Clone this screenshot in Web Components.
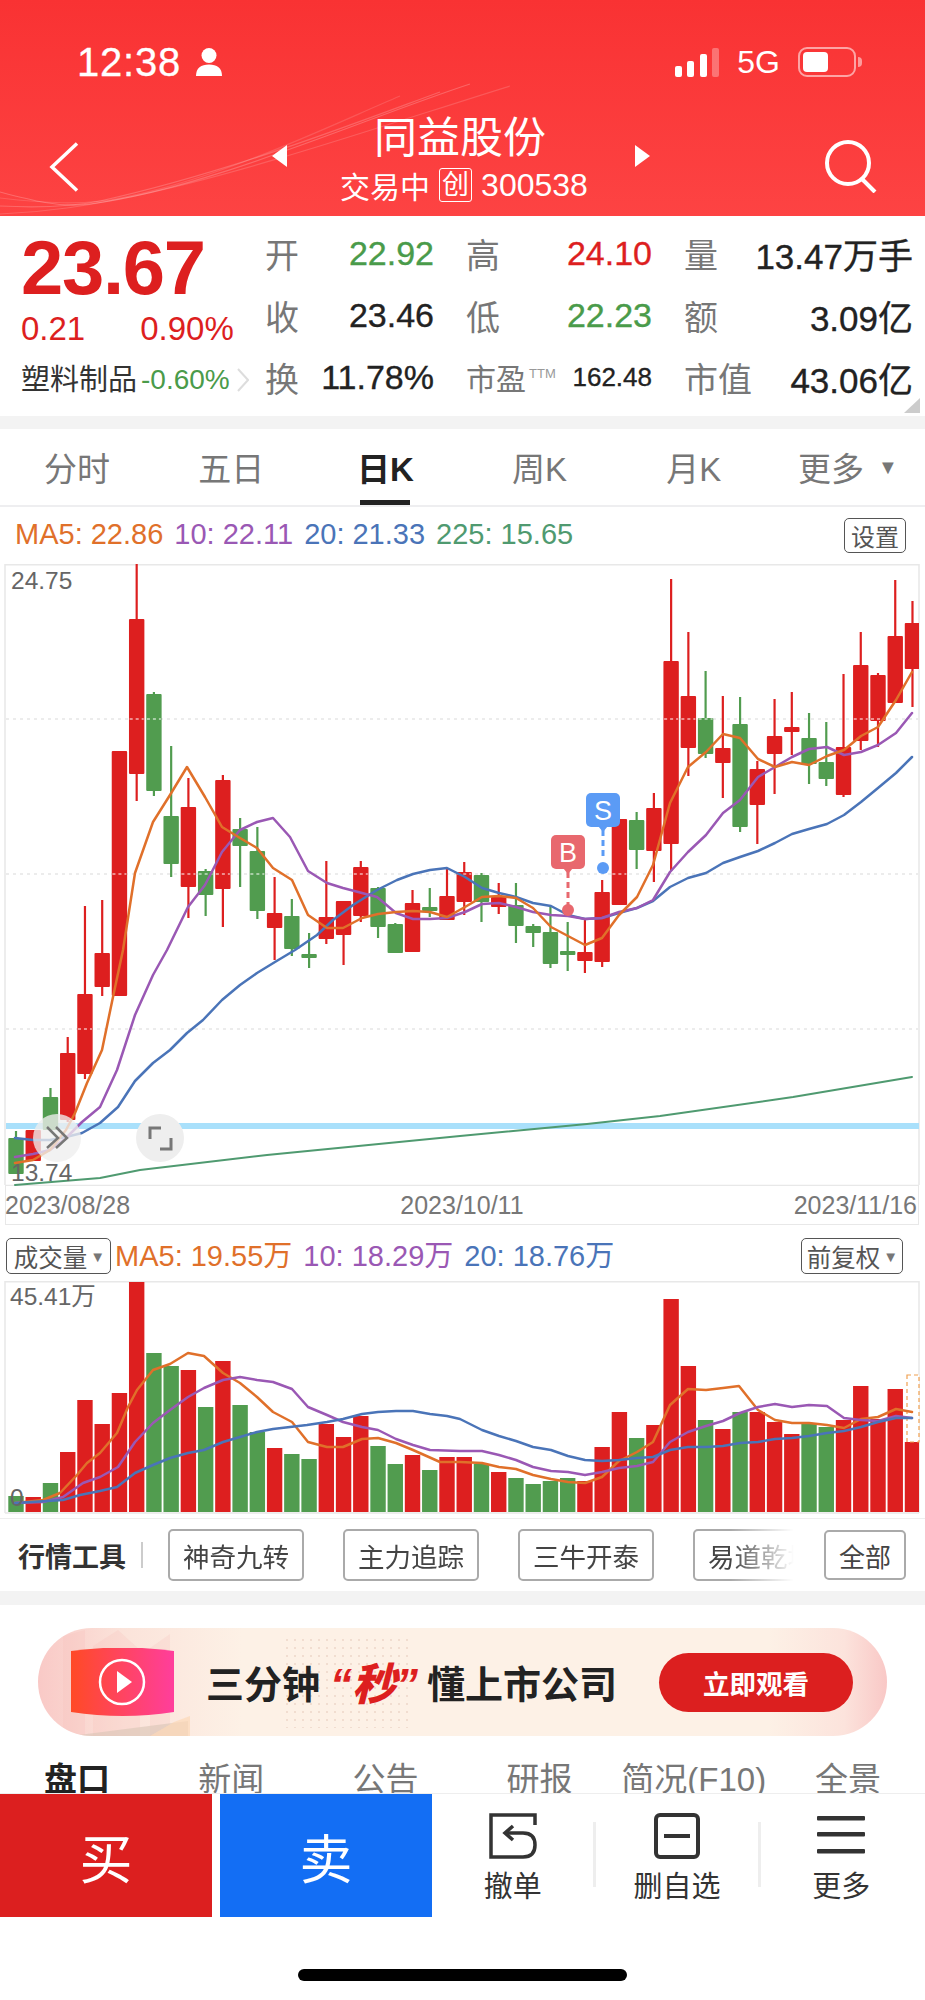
<!DOCTYPE html>
<html lang="zh">
<head>
<meta charset="utf-8">
<title>同益股份</title>
<style>
  html, body { margin: 0; background: #fff; }
  body {
    width: 925px;
    height: 2000px;
    overflow: hidden;
    font-family: "Liberation Sans", "Noto Sans CJK SC", sans-serif;
    color: #222;
  }
</style>
</head>
<body>
<stock-header></stock-header>
<quote-panel></quote-panel>
<period-tabs></period-tabs>
<ma-legend style="--legend-h:57px;--chip-top:11px;--pad-r:19px;--text-top:-2px">
  <span style="color:#e0702a">MA5: 22.86</span>
  <span style="color:#9a58b4">10: 22.11</span>
  <span style="color:#4a74b8">20: 21.33</span>
  <span style="color:#4f9a70">225: 15.65</span>
  <outline-chip slot="action" style="font-size:24px;padding:0 6px;height:35px">设置</outline-chip>
</ma-legend>
<candle-chart></candle-chart>
<date-axis></date-axis>
<ma-legend style="--legend-h:56px;--chip-top:13px;--pad-r:22px;--text-top:0px" lead>
  <outline-chip slot="lead" style="font-size:24.5px;padding:0 4px 0 6px;height:36px">成交量<i style="font-style:normal;font-size:15px;color:#777;margin-left:3px">▼</i></outline-chip>
  <span style="color:#e0702a">MA5: 19.55万</span>
  <span style="color:#9a58b4">10: 18.29万</span>
  <span style="color:#4a74b8">20: 18.76万</span>
  <outline-chip slot="action" style="font-size:24.5px;padding:0 4px 0 5px;height:36px">前复权<i style="font-style:normal;font-size:15px;color:#777;margin-left:3px">▼</i></outline-chip>
</ma-legend>
<volume-chart></volume-chart>
<tool-strip></tool-strip>
<promo-banner></promo-banner>
<detail-tabs></detail-tabs>
<trade-bar></trade-bar>
<home-indicator></home-indicator>

<script>
// daily bars read off the chart: [colour, high, top, bottom, low, volume top]
const BARS = [
  ['g',1131,1138,1174,1174,1496],['r',1130,1130,1161,1161,1497],['g',1088,1097,1130,1130,1483],['r',1037,1053,1120,1122,1452],
  ['r',906,994,1074,1079,1400],['r',900,953,987,996,1424],['r',751,751,996,996,1393],['r',564,619,774,801,1282],
  ['g',692,694,791,796,1353],['g',746,816,864,877,1366],['r',778,807,887,918,1370],['g',869,871,895,916,1407],
  ['r',775,780,889,927,1361],['g',818,829,846,887,1405],['g',827,851,911,919,1432],['r',877,913,928,960,1448],
  ['g',899,916,949,956,1454],['g',933,954,958,968,1459],['r',861,917,939,944,1424],['r',901,901,935,965,1437],
  ['r',861,867,916,922,1416],['g',887,888,927,938,1446],['g',923,924,953,953,1464],['r',890,903,952,952,1455],
  ['g',888,907,911,917,1470],['r',868,896,920,920,1457],['r',862,872,902,915,1457],['g',873,875,902,922,1464],
  ['r',883,897,907,914,1472],['g',883,905,926,943,1478],['g',924,926,933,947,1484],['g',907,932,964,968,1481],
  ['g',922,951,955,971,1478],['r',920,952,961,973,1481],['r',880,892,962,967,1447],['r',819,819,905,905,1412],
  ['g',812,820,850,869,1438],['r',793,808,851,882,1425],['r',579,661,844,871,1299],['r',632,696,748,776,1366],
  ['g',671,718,754,758,1420],['r',696,748,763,798,1429],['g',697,724,827,832,1412],['r',761,769,805,844,1412],
  ['r',699,736,754,794,1422],['r',692,727,732,755,1434],['g',713,738,764,784,1423],['g',722,762,779,786,1427],
  ['r',674,747,795,797,1420],['r',632,665,741,750,1386],['r',673,675,721,747,1419],['r',580,636,703,703,1389],
  ['r',601,623,669,707,1442],
];
const COLORS = { r: '#dd1f1f', g: '#519c4f', ma5: '#e0702a', ma10: '#9a58b4', ma20: '#4a74b8', ma225: '#4f9a70' };
const barX = (i) => 16 + 17.24 * i;

const line = (points, color, width = 2.5) =>
  `<polyline points="${points}" fill="none" stroke="${color}" stroke-width="${width}" stroke-linejoin="round" stroke-linecap="round"/>`;

class StockHeader extends HTMLElement {
  constructor() {
    super();
    this.root = this.attachShadow({ mode: 'open' });
    this.root.innerHTML = `
    <style>
      :host {
        display: block;
        position: relative;
        height: 216px;
        padding-top: 44px;
        box-sizing: border-box;
        color: #fff;
        background: linear-gradient(180deg, #f93233 0%, #fd4343 100%);
        overflow: hidden;
      }
      .waves { position: absolute; left: 0; top: 0; }
      .status {
        position: relative;
        display: flex;
        align-items: center;
        height: 36px;
        padding: 0 63px 0 77px;
      }
      .time { font-size: 40px; letter-spacing: .8px; line-height: 36px; -webkit-text-stroke: .3px #fff; }
      .person { margin-left: 15px; }
      .right { margin-left: auto; display: flex; align-items: center; }
      .five-g { font-size: 32px; line-height: 36px; margin: 0 18px; }
      .battery {
        box-sizing: border-box;
        width: 58px;
        height: 30px;
        padding: 3px;
        border: 2px solid rgba(255,255,255,.55);
        border-radius: 9px;
      }
      .battery i { display: block; width: 25px; height: 20px; background: #fff; border-radius: 4px; }
      .nub { width: 4px; height: 10px; margin-left: 2px; background: rgba(255,255,255,.5); border-radius: 0 4px 4px 0; }
      .nav {
        position: relative;
        display: grid;
        grid-template-columns: 1fr auto 1fr;
        align-items: center;
        margin-top: 36px;
        padding: 0 48px 0 49px;
      }
      .back { margin-top: 15px; }
      .search { justify-self: end; margin-top: 13px; }
      .step { display: flex; align-items: center; transform: translateX(-2px); }
      .step svg { margin-top: -8px; }
      .title { text-align: center; margin: 0 50px 0 48px; }
      .name { font-size: 43px; line-height: 44px; letter-spacing: 0; }
      .sub {
        display: flex;
        align-items: center;
        justify-content: center;
        height: 36px;
        margin-top: 7px;
        font-size: 30px;
        white-space: nowrap;
        transform: translateX(4px);
      }
      .board {
        display: inline-flex;
        align-items: center;
        justify-content: center;
        box-sizing: border-box;
        width: 33px;
        height: 34px;
        margin: 0 9px;
        border: 1.5px solid #fff;
        border-radius: 3px;
        font-size: 27px;
        line-height: 1;
      }
      .code { font-size: 32px; }
    </style>
    <svg class="waves" width="925" height="216" fill="none" stroke="#fff" stroke-width="1.2">
      <path opacity=".22" d="M0 192C30 200 60 208 90 204C210 188 360 120 470 84"/>
      <path opacity=".2" d="M0 206C40 208 70 207 100 201C230 172 350 125 440 92"/>
      <path opacity=".16" d="M0 214C50 212 90 205 130 197C250 172 400 120 510 86"/>
      <path opacity=".14" d="M0 198C50 204 80 204 110 200C220 180 320 130 400 96"/>
    </svg>
    <div class="status">
      <span class="time">12:38</span>
      <svg class="person" width="26" height="28" viewBox="0 0 26 28" fill="#fff"><circle cx="13" cy="7.500" r="7.500"/><path d="M0 28c0-8 5-11.500 13-11.500S26 20 26 28z"/></svg>
      <div class="right">
        <svg width="44" height="29" viewBox="0 0 44 29" fill="#fff"><rect y="18" width="7" height="11" rx="2"/><rect x="12" y="13" width="7" height="16" rx="2"/><rect x="25" y="6" width="7" height="23" rx="2"/><rect x="37" width="7" height="29" rx="2" opacity=".3"/></svg>
        <span class="five-g">5G</span>
        <div class="battery"><i></i></div>
        <div class="nub"></div>
      </div>
    </div>
    <div class="nav">
      <svg class="back" width="30" height="50" viewBox="0 0 30 50" fill="none" stroke="#fff" stroke-width="3.500"><path d="M28 1.500L3 25l25 23.500"/></svg>
      <div class="step">
        <svg width="16" height="22" viewBox="0 0 16 22" fill="#fff"><path d="M0 11L15 0v22z"/></svg>
        <div class="title">
          <div class="name">同益股份</div>
          <div class="sub">交易中<span class="board">创</span><span class="code">300538</span></div>
        </div>
        <svg width="16" height="22" viewBox="0 0 16 22" fill="#fff"><path d="M16 11L1 0v22z"/></svg>
      </div>
      <svg class="search" width="52" height="54" viewBox="0 0 52 54" fill="none" stroke="#fff" stroke-width="4"><circle cx="23" cy="24" r="21"/><path d="M37 40l13 13"/></svg>
    </div>
    `;
  }
}
customElements.define('stock-header', StockHeader);

class QuotePanel extends HTMLElement {
  constructor() {
    super();
    const cell = (label, value, color = '#222', cls = '') => `
      <div class="cell"><span class="lab">${label}</span><span class="val ${cls}" style="color:${color}">${value}</span></div>`;
    this.root = this.attachShadow({ mode: 'open' });
    this.root.innerHTML = `
    <style>
      :host {
        display: flex;
        position: relative;
        box-sizing: border-box;
        height: 200px;
        padding: 6px 11px 0 21px;
        background: #fff;
      }
      .left { width: 244px; flex: none; }
      .price {
        margin-top: 6px;
        font-size: 76px;
        line-height: 80px;
        font-weight: 700;
        letter-spacing: -1.300px;
        color: #dd1f1f;
      }
      .change {
        display: flex;
        gap: 55px;
        margin-top: 3px;
        font-size: 33px;
        line-height: 36px;
        color: #dd1f1f;
      }
      .sector {
        display: flex;
        align-items: center;
        margin-top: 15px;
        font-size: 29px;
        line-height: 36px;
        white-space: nowrap;
        color: #333;
      }
      .sector b { font-weight: 400; font-size: 28px; margin-left: 4px; color: #4a9b4a; }
      .sector svg { margin-left: 7px; }
      .grid {
        display: grid;
        grid-template-columns: 169px 186px 229px;
        grid-auto-rows: 62px;
        column-gap: 32px;
      }
      .cell { display: flex; align-items: center; justify-content: space-between; white-space: nowrap; }
      .lab { font-size: 34px; color: #777; }
      .val { font-size: 34px; -webkit-text-stroke: .35px currentColor; }
      .wide { font-size: 35px; }
      .small { font-size: 30px; }
      .small sup { font-size: 13px; vertical-align: 12px; line-height: 0; margin-left: 3px; color: #999; }
      .fine { font-size: 26px; }
      .corner { position: absolute; right: 5px; bottom: 3px; }
    </style>
    <div class="left">
      <div class="price">23.67</div>
      <div class="change"><span>0.21</span><span>0.90%</span></div>
      <div class="sector">塑料制品<b>-0.60%</b>
        <svg width="12" height="24" viewBox="0 0 12 24" fill="none" stroke="#ddd" stroke-width="2"><path d="M1 1l10 11L1 23"/></svg>
      </div>
    </div>
    <div class="grid">
      ${cell('开', '22.92', '#4a9b4a')}${cell('高', '24.10', '#dd1f1f')}${cell('量', '13.47万手', '#222', 'wide')}
      ${cell('收', '23.46')}${cell('低', '22.23', '#4a9b4a')}${cell('额', '3.09亿', '#222', 'wide')}
      ${cell('换', '11.78%')}
      <div class="cell"><span class="lab small">市盈<sup>TTM</sup></span><span class="val fine">162.48</span></div>
      ${cell('市值', '43.06亿', '#222', 'wide')}
    </div>
    <svg class="corner" width="16" height="15" viewBox="0 0 16 15" fill="#ccc"><path d="M16 0v15H0z"/></svg>
    `;
  }
}
customElements.define('quote-panel', QuotePanel);

class PeriodTabs extends HTMLElement {
  constructor() {
    super();
    this.root = this.attachShadow({ mode: 'open' });
    this.root.innerHTML = `
    <style>
      :host {
        display: grid;
        grid-template-columns: repeat(6, 1fr);
        box-sizing: border-box;
        height: 91px;
        border-top: 13px solid #f3f3f3;
        border-bottom: 2px solid #eeeef0;
        background: #fff;
        font-size: 33px;
        color: #777;
      }
      span {
        position: relative;
        display: flex;
        align-items: center;
        justify-content: center;
        height: 76px;
        box-sizing: border-box;
      }
      .on { color: #222; font-weight: 700; }
      .on::after {
        content: "";
        position: absolute;
        left: 50%;
        bottom: 0;
        width: 50px;
        height: 5px;
        margin-left: -25px;
        background: #222;
      }
      i { font-style: normal; font-size: 20px; margin-left: 14px; color: #777; }
    </style>
    <span>分时</span><span>五日</span><span class="on">日K</span><span>周K</span><span>月K</span><span>更多<i>▼</i></span>
    `;
  }
}
customElements.define('period-tabs', PeriodTabs);

class OutlineChip extends HTMLElement {
  constructor() {
    super();
    this.attachShadow({ mode: 'open' }).innerHTML = `
    <style>
      :host {
        display: inline-flex;
        align-items: center;
        justify-content: center;
        box-sizing: border-box;
        border: 1.500px solid #555;
        border-radius: 5px;
        color: #555;
        white-space: nowrap;
        background: #fff;
      }
    </style>
    <slot></slot>
    `;
  }
}
customElements.define('outline-chip', OutlineChip);

class MaLegend extends HTMLElement {
  constructor() {
    super();
    this.attachShadow({ mode: 'open' }).innerHTML = `
    <style>
      :host {
        display: flex;
        align-items: flex-start;
        box-sizing: border-box;
        height: var(--legend-h);
        padding: var(--chip-top) var(--pad-r) 0 6px;
        background: #fff;
      }
      .items {
        display: flex;
        gap: 11px;
        margin-top: var(--text-top);
        padding-left: 9px;
        font-size: 29px;
        line-height: 36px;
        white-space: nowrap;
      }
      .lead { display: contents; }
      :host([lead]) .items { padding-left: 4px; gap: 11px; }
      .act { margin-left: auto; display: flex; }
      ::slotted(outline-chip[slot="lead"]) { width: 105px; }
      ::slotted(outline-chip[slot="action"]) { min-width: 62px; }
    </style>
    <div class="lead"><slot name="lead"></slot></div>
    <div class="items"><slot></slot></div>
    <div class="act"><slot name="action"></slot></div>
    `;
  }
}
customElements.define('ma-legend', MaLegend);

class CandleChart extends HTMLElement {
  constructor() {
    super();
    const ma5 = '15,1163 33,1160 50,1150 66,1130 75,1113 87,1083 102,1050 113,997 123,950 135,873 153,822 170,795 187,767 205,797 222,827 240,838 257,848 273,868 292,880 308,915 327,928 343,928 362,918 378,914 396,912 413,911 430,912 447,917 465,907 482,897 499,896 516,898 533,908 551,927 568,936 585,945 602,938 619,915 637,897 653,865 670,803 688,767 706,752 723,734 740,738 758,759 775,767 792,762 809,765 827,756 844,750 861,736 878,727 896,700 912,672';
    const ma10 = '15,1157 33,1154 50,1150 66,1138 82,1122 100,1107 117,1070 135,1015 153,975 167,950 188,907 205,885 222,852 240,830 257,822 273,818 290,837 308,871 327,883 343,888 362,893 377,897 396,913 413,919 430,919 447,918 465,912 482,904 499,903 516,907 533,912 551,915 568,916 585,919 602,918 619,912 637,908 653,900 670,872 688,852 706,835 723,813 740,800 758,777 775,767 792,757 809,749 827,747 844,755 861,752 878,745 896,733 912,713';
    const ma20 = '15,1138 33,1140 50,1140 66,1137 82,1133 100,1123 118,1107 135,1081 153,1063 170,1050 187,1033 203,1020 222,1000 240,985 257,973 275,962 295,950 317,935 333,920 353,905 377,890 397,880 413,874 430,870 447,868 465,877 482,888 499,893 516,897 533,903 551,906 568,915 585,919 602,918 619,913 637,908 653,901 670,887 688,878 706,873 723,863 740,857 758,851 775,843 792,834 809,829 827,824 844,815 861,802 878,788 896,773 912,757';
    const ma225 = '15,1185 100,1178 140,1170 267,1155 460,1136 587,1124 660,1116 793,1097 912,1077';
    const gridYs = [719, 874, 1029];

    const candles = BARS.map(([c, high, top, bottom, low], i) => {
      const x = barX(i);
      const color = COLORS[c];
      let out = `<line x1="${x}" x2="${x}" y1="${high}" y2="${low}" stroke="${color}" stroke-width="2.200"/>
        <rect x="${x - 7.700}" y="${top}" width="15.400" height="${bottom - top}" rx="1" fill="${color}"/>`;
      gridYs.forEach((y) => {
        if (top < y && bottom > y) {
          out += `<line x1="${x - 7}" x2="${x + 7}" y1="${y}" y2="${y}" stroke="#fff" stroke-width="1.200" stroke-dasharray="3 3"/>`;
        }
      });
      return out;
    }).join('');

    this.root = this.attachShadow({ mode: 'open' });
    this.root.innerHTML = `
    <style>
      :host { display: block; position: relative; height: 622px; background: #fff; }
      svg { display: block; }
      .axis { position: absolute; left: 11px; font-size: 24.500px; line-height: 24px; color: #666; }
    </style>
    <svg width="925" height="622" viewBox="0 564 925 622">
      <defs><clipPath id="plot"><rect x="5" y="564" width="914" height="622"/></clipPath></defs>
      <path d="M5 1185V564.800H919V1185M5 1185.500H919" fill="none" stroke="#e8e8e8" stroke-width="1.500"/>
      ${gridYs.map((y) => `<line x1="6" x2="918" y1="${y}" y2="${y}" stroke="#d9d9d9" stroke-width="1.200" stroke-dasharray="3 4"/>`).join('')}
      <rect x="6" y="1123" width="913" height="6" fill="#a9e0fb"/>
      <g clip-path="url(#plot)">${candles}</g>
      ${line(ma225, COLORS.ma225, 2)}
      ${line(ma20, COLORS.ma20)}
      ${line(ma10, COLORS.ma10)}
      ${line(ma5, COLORS.ma5)}

      <line x1="568" x2="568" y1="872" y2="905" stroke="#e8686e" stroke-width="3" stroke-dasharray="6 4"/>
      <circle cx="568" cy="910" r="6" fill="#e8686e"/>
      <path d="M563 868h10l-5 6z" fill="#e8686e"/>
      <rect x="551" y="835" width="34" height="34" rx="5" fill="#e8686e"/>
      <text x="568" y="862" text-anchor="middle" font-size="27" fill="#fff" font-family="Liberation Sans">B</text>

      <line x1="603" x2="603" y1="830" y2="860" stroke="#5b9bf5" stroke-width="3" stroke-dasharray="6 4"/>
      <circle cx="603" cy="868" r="6" fill="#5b9bf5"/>
      <path d="M598 826h10l-5 6z" fill="#5b9bf5"/>
      <rect x="586" y="793" width="34" height="34" rx="5" fill="#5b9bf5"/>
      <text x="603" y="820" text-anchor="middle" font-size="27" fill="#fff" font-family="Liberation Sans">S</text>

      <circle cx="57" cy="1138" r="24" fill="#eee" fill-opacity=".78"/>
      <path d="M47 1127l11 11-11 10M56 1127l11 11-11 10" fill="none" stroke="#777" stroke-width="2.500"/>
      <circle cx="160" cy="1138" r="24" fill="#eee"/>
      <path d="M150 1139v-11h11M171 1138v11h-11" fill="none" stroke="#777" stroke-width="3"/>
    </svg>
    <span class="axis" style="top:5px">24.75</span>
    <span class="axis" style="top:597px">13.74</span>
    `;
  }
}
customElements.define('candle-chart', CandleChart);

class DateAxis extends HTMLElement {
  constructor() {
    super();
    this.attachShadow({ mode: 'open' }).innerHTML = `
    <style>
      :host {
        display: flex;
        justify-content: space-between;
        align-items: center;
        box-sizing: border-box;
        width: 914px;
        height: 39px;
        margin-left: 5px;
        border-left: 1.500px solid #e8e8e8;
        border-right: 1.500px solid #e8e8e8;
        border-bottom: 1.500px solid #e8e8e8;
        font-size: 25px;
        color: #777;
      }
      span { margin-left: -1px; }
      span:last-child { margin-right: 1px; }
    </style>
    <span>2023/08/28</span><span>2023/10/11</span><span>2023/11/16</span>
    `;
  }
}
customElements.define('date-axis', DateAxis);

class VolumeChart extends HTMLElement {
  constructor() {
    super();
    const ma5 = '15,1503 43,1500 60,1493 77,1475 87,1463 100,1453 117,1433 128,1407 137,1390 153,1370 170,1364 188,1353 204,1356 223,1373 240,1383 257,1397 273,1412 292,1422 308,1442 327,1447 343,1447 362,1439 378,1438 396,1443 413,1450 440,1462 460,1462 482,1463 499,1467 516,1469 533,1475 551,1479 568,1482 585,1483 602,1477 619,1461 637,1452 653,1442 670,1405 688,1389 706,1390 723,1388 739,1386 758,1410 775,1420 792,1423 809,1423 827,1425 844,1428 861,1419 878,1417 896,1409 912,1412';
    const ma10 = '15,1503 43,1502 63,1497 83,1483 100,1477 118,1467 135,1442 153,1423 170,1410 188,1397 204,1388 223,1380 240,1377 257,1380 273,1382 292,1389 308,1407 327,1415 343,1422 362,1427 378,1430 396,1439 413,1445 430,1450 460,1451 482,1451 499,1455 516,1460 533,1467 551,1471 568,1472 585,1475 602,1472 619,1468 637,1466 653,1462 670,1442 688,1432 706,1426 723,1421 740,1413 758,1407 775,1404 792,1407 809,1405 827,1406 844,1418 861,1420 878,1421 896,1416 912,1418';
    const ma20 = '15,1503 63,1500 80,1495 100,1491 117,1487 135,1473 153,1465 170,1458 188,1453 204,1450 223,1442 240,1437 257,1432 273,1429 307,1425 327,1422 343,1419 362,1414 378,1412 396,1411 413,1411 430,1414 447,1416 460,1419 482,1430 499,1436 516,1441 533,1447 551,1450 568,1456 585,1460 602,1461 619,1460 637,1458 653,1457 670,1450 688,1447 706,1447 723,1446 740,1443 758,1442 775,1439 792,1438 809,1436 827,1433 844,1431 861,1427 878,1422 896,1418 912,1418';

    const bars = BARS.map((b, i) => `<rect x="${barX(i) - 7.700}" y="${b[5]}" width="15.400" height="${1512 - b[5]}" fill="${COLORS[b[0]]}"/>`).join('');

    this.root = this.attachShadow({ mode: 'open' });
    this.root.innerHTML = `
    <style>
      :host { display: block; position: relative; height: 237px; background: #fff; }
      svg { display: block; }
      .axis { position: absolute; left: 10px; font-size: 24.500px; line-height: 24px; color: #666; }
    </style>
    <svg width="925" height="237" viewBox="0 1281 925 237">
      <defs><clipPath id="vol"><rect x="5" y="1281" width="914" height="232"/></clipPath></defs>
      <path d="M5 1513V1281.700H919V1513M5 1513H919" fill="none" stroke="#e8e8e8" stroke-width="1.500"/>
      <g clip-path="url(#vol)">${bars}</g>
      <rect x="907" y="1375" width="12" height="67" fill="#fff" stroke="#f0a050" stroke-width="1.200" stroke-dasharray="4 3"/>
      ${line(ma5, COLORS.ma5)}
      ${line(ma10, COLORS.ma10)}
      ${line(ma20, COLORS.ma20)}
    </svg>
    <span class="axis" style="top:4px">45.41万</span>
    <span class="axis" style="top:205px">0</span>
    `;
  }
}
customElements.define('volume-chart', VolumeChart);

class ToolStrip extends HTMLElement {
  constructor() {
    super();
    this.root = this.attachShadow({ mode: 'open' });
    this.root.innerHTML = `
    <style>
      :host {
        display: flex;
        align-items: center;
        box-sizing: border-box;
        height: 87px;
        padding: 0 19px 0 18px;
        border-top: 1.500px solid #eee;
        border-bottom: 14px solid #f3f3f3;
        background: #fff;
      }
      .label { font-size: 27px; font-weight: 700; white-space: nowrap; color: #333; }
      .sep { width: 2px; height: 26px; margin: 0 25px 0 15px; background: #ccc; flex: none; }
      .scroll {
        display: flex;
        gap: 39px;
        width: 632px;
        flex: none;
        overflow: hidden;
        -webkit-mask-image: linear-gradient(to right, #000 89%, transparent 99%);
        mask-image: linear-gradient(to right, #000 89%, transparent 99%);
      }
      outline-chip {
        flex: none;
        height: 52px;
        padding: 0 13px;
        font-size: 26.500px;
        border: 2px solid #aaa;
        color: #444;
        box-sizing: border-box;
      }
      .all { margin-left: auto; width: 82px; height: 50px; padding: 0; font-size: 26px; }
    </style>
    <span class="label">行情工具</span><span class="sep"></span>
    <div class="scroll">
      <outline-chip>神奇九转</outline-chip>
      <outline-chip>主力追踪</outline-chip>
      <outline-chip>三牛开泰</outline-chip>
      <outline-chip>易道乾坤</outline-chip>
    </div>
    <outline-chip class="all">全部</outline-chip>
    `;
  }
}
customElements.define('tool-strip', ToolStrip);

class PromoBanner extends HTMLElement {
  constructor() {
    super();
    this.root = this.attachShadow({ mode: 'open' });
    this.root.innerHTML = `
    <style>
      :host { display: block; padding: 23px 38px 0; height: 131px; box-sizing: border-box; background: #fff; }
      .pill {
        position: relative;
        display: flex;
        align-items: center;
        height: 108px;
        padding: 0 34px 0 33px;
        overflow: hidden;
        border-radius: 54px;
        background: linear-gradient(90deg, #f9c9c6 0%, #fbe3da 10%, #fdf1e6 24%, #fdf1e6 86%, #fce3dc 95%, #f9c8c6 100%);
      }
      .deco { position: absolute; left: 0; top: 0; }
      .dots {
        position: absolute;
        left: 245px;
        top: 8px;
        width: 125px;
        height: 92px;
        background: radial-gradient(circle, #f1ddd0 1px, transparent 1.500px) 0 0 / 8px 8px;
      }
      .play { position: relative; flex: none; }
      .text {
        position: relative;
        display: flex;
        align-items: center;
        margin-left: 32px;
        margin-top: -2px;
        font-size: 38px;
        font-weight: 700;
        white-space: nowrap;
        color: #222;
      }
      .text b { font-size: 44px; font-style: italic; color: #dd1f1f; margin: 0 9px 0 10px; }
      .go {
        position: relative;
        margin-left: auto;
        display: flex;
        align-items: center;
        justify-content: center;
        width: 194px;
        height: 59px;
        border-radius: 30px;
        background: #dc1f1f;
        color: #fff;
        font-size: 26.500px;
        font-weight: 700;
      }
    </style>
    <div class="pill">
      <svg class="deco" width="380" height="108" viewBox="0 0 380 108">
        <path d="M25 108V8l22-6v106zM55 108V18l25-16 22 20v86zM112 108V20l20-14v102z" fill="#f8b9b6" opacity=".22"/>
        <path d="M33 108L150 93v15z" fill="#d8c4b6" opacity=".6"/>
        <path d="M136 94l16-6v20h-40z" fill="#fcd9b8" opacity=".7"/>
      </svg>
      <div class="dots"></div>
      <svg class="play" width="103" height="68" viewBox="0 0 103 68">
        <defs><linearGradient id="pg" x1="0" x2="1" y1="0" y2="0"><stop offset="0" stop-color="#ff4a26"/><stop offset="1" stop-color="#ff3e9c"/></linearGradient></defs>
        <path d="M0 3Q52 -4 103 3V64Q52 72 0 64z" fill="url(#pg)"/>
        <circle cx="51" cy="34" r="22" fill="none" stroke="#fff" stroke-width="2.500"/>
        <path d="M46 23l15 11-15 11z" fill="#fff"/>
      </svg>
      <div class="text">三分钟<b>“秒”</b>懂上市公司</div>
      <div class="go">立即观看</div>
    </div>
    `;
  }
}
customElements.define('promo-banner', PromoBanner);

class DetailTabs extends HTMLElement {
  constructor() {
    super();
    this.attachShadow({ mode: 'open' }).innerHTML = `
    <style>
      :host {
        display: grid;
        grid-template-columns: repeat(6, 1fr);
        height: 57px;
        padding-top: 26px;
        box-sizing: border-box;
        overflow: hidden;
        font-size: 33px;
        line-height: 36px;
        color: #777;
        text-align: center;
        background: #fff;
      }
      span { white-space: nowrap; }
      .on { font-weight: 700; color: #222; }
    </style>
    <span class="on">盘口</span><span>新闻</span><span>公告</span><span>研报</span><span>简况(F10)</span><span>全景</span>
    `;
  }
}
customElements.define('detail-tabs', DetailTabs);

class TradeBar extends HTMLElement {
  constructor() {
    super();
    this.root = this.attachShadow({ mode: 'open' });
    this.root.innerHTML = `
    <style>
      :host {
        display: flex;
        box-sizing: border-box;
        height: 124px;
        border-top: 1.500px solid #eee;
        background: #fff;
        color: #333;
      }
      .deal {
        display: flex;
        align-items: center;
        justify-content: center;
        width: 212px;
        flex: none;
        color: #fff;
        font-size: 53px;
      }
      .buy { background: #dc1f1f; margin-right: 8px; }
      .sell { background: #136ef4; }
      .acts { display: flex; flex: 1; padding-right: 3px; }
      .act {
        flex: 1;
        display: flex;
        flex-direction: column;
        align-items: center;
        padding-top: 19px;
        font-size: 29px;
      }
      .act span { line-height: 30px; margin-top: 13px; white-space: nowrap; }
      .div { width: 3px; height: 65px; margin-top: 28px; background: #eee; flex: none; }
      svg { display: block; }
    </style>
    <div class="deal buy">买</div>
    <div class="deal sell">卖</div>
    <div class="acts">
      <div class="act">
        <svg width="48" height="46" viewBox="0 0 48 46" fill="none" stroke="#333" stroke-width="3.500">
          <path d="M46 12V2H2v42h32"/>
          <path d="M16 20H34Q46 20 46 32T34 44"/>
          <path d="M24 13l-8 7 8 7"/>
        </svg>
        <span>撤单</span>
      </div>
      <div class="div"></div>
      <div class="act">
        <svg width="46" height="46" viewBox="0 0 46 46" fill="none" stroke="#333" stroke-width="4">
          <rect x="2" y="2" width="42" height="42" rx="4"/><path d="M10 23h26"/>
        </svg>
        <span>删自选</span>
      </div>
      <div class="div"></div>
      <div class="act">
        <svg width="48" height="46" viewBox="0 0 48 46" fill="#333">
          <rect y="3" width="48" height="4.500" rx="1"/><rect y="19" width="48" height="4.500" rx="1"/><rect y="36" width="48" height="4.500" rx="1"/>
        </svg>
        <span>更多</span>
      </div>
    </div>
    `;
  }
}
customElements.define('trade-bar', TradeBar);

class HomeIndicator extends HTMLElement {
  constructor() {
    super();
    this.attachShadow({ mode: 'open' }).innerHTML = `
    <style>
      :host { display: flex; justify-content: center; padding-top: 52px; background: #fff; }
      i { display: block; width: 329px; height: 12px; border-radius: 6px; background: #000; }
    </style>
    <i></i>
    `;
  }
}
customElements.define('home-indicator', HomeIndicator);
</script>
</body>
</html>
